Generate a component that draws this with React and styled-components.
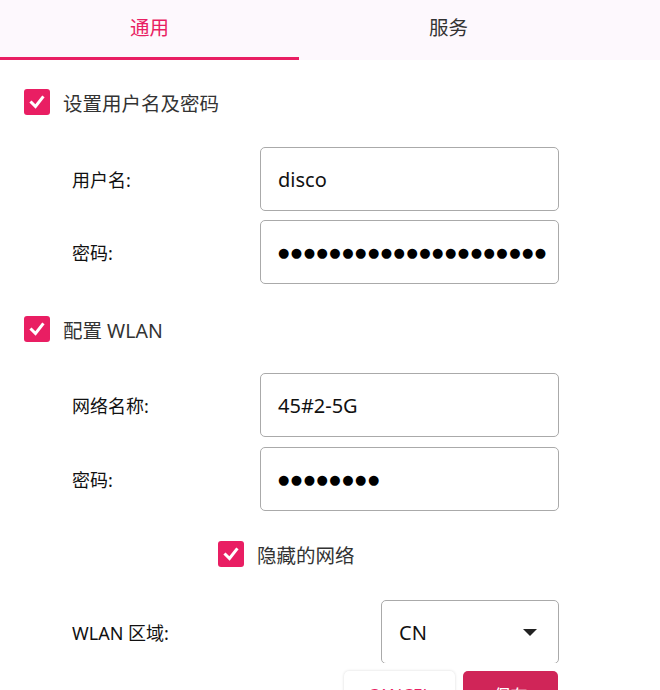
import React from "react";
import styled, { createGlobalStyle } from "styled-components";

const GlobalStyle = createGlobalStyle`
  html, body {
    margin: 0;
    padding: 0;
    background: #ffffff;
  }
  body {
    font-family: "Noto Sans", "Noto Sans CJK SC", sans-serif;
    color: #333;
  }
`;

const Page = styled.div`
  width: 660px;
  height: 690px;
  overflow: hidden;
  display: flex;
  flex-direction: column;
`;

const Scroll = styled.div`
  height: 663px;
  overflow: hidden;
  flex-shrink: 0;
`;

const TabBar = styled.div`
  display: flex;
  height: 60px;
  background: #fdf8fd;
`;

const Tab = styled.div`
  width: 299px;
  display: flex;
  align-items: center;
  justify-content: center;
  box-sizing: border-box;
  padding-bottom: 5px;
  font-size: 19.5px;
  font-family: "Noto Sans CJK SC", sans-serif;
  color: ${(p) => (p.$active ? "#e91e63" : "#333")};
  border-bottom: 3px solid ${(p) => (p.$active ? "#e91e63" : "transparent")};
`;

const Form = styled.div`
  padding: 0 0 0 24px;
  display: flex;
  flex-direction: column;
`;

const CheckRow = styled.label`
  display: flex;
  align-items: center;
  gap: 13px;
  height: 26px;
  margin-top: ${(p) => p.$top}px;
  margin-bottom: ${(p) => p.$bottom}px;
  margin-left: ${(p) => p.$indent || 0}px;
  font-size: 19.5px;
  font-family: "Noto Sans", "Noto Sans CJK SC", sans-serif;
  color: #333;
`;

const Box = styled.span`
  width: 26px;
  height: 26px;
  border-radius: 3px;
  background: #e91e63;
  display: inline-flex;
  align-items: center;
  justify-content: center;
  flex-shrink: 0;
`;

const Fields = styled.div`
  display: flex;
  flex-direction: column;
  gap: ${(p) => p.$gap}px;
`;

const FieldRow = styled.div`
  display: flex;
  align-items: center;
  padding-left: 48px;
`;

const Label = styled.div`
  width: ${(p) => p.$w || 188}px;
  font-size: 18px;
  color: #111;
`;

const Input = styled.div`
  width: 299px;
  height: 64px;
  box-sizing: border-box;
  border: 1.5px solid #aaa;
  border-radius: 5px;
  display: flex;
  align-items: center;
  padding-left: 17px;
  font-size: 20px;
  color: #111;
  overflow: hidden;
  white-space: nowrap;
`;

const Dots = styled.span`
  font-family: "DejaVu Sans", sans-serif;
  font-size: 13px;
  letter-spacing: 1.5px;
  color: #000;
`;

const Select = styled(Input)`
  width: 178px;
  justify-content: space-between;
  padding-right: 21px;
`;

const Caret = styled.span`
  width: 0;
  height: 0;
  border-left: 7px solid transparent;
  border-right: 7px solid transparent;
  border-top: 7px solid #222;
`;

const Footer = styled.div`
  display: flex;
  gap: 8px;
  padding-left: 344px;
  margin-top: 8px;
`;

const Button = styled.button`
  width: ${(p) => p.$w}px;
  height: 40px;
  border: none;
  border-radius: 5px;
  font-family: "Noto Sans", "Noto Sans CJK SC", sans-serif;
  font-size: 17px;
  padding-top: 8px;
  background: ${(p) => (p.$primary ? "#d02558" : "#fff")};
  color: ${(p) => (p.$primary ? "#fff" : "#e91e63")};
  box-shadow: ${(p) => (p.$primary ? "none" : "0 0 3px rgba(0,0,0,0.15)")};
`;

const Check = () => (
  <Box>
    <svg width="18" height="18" viewBox="0 0 18 18">
      <polyline points="3.5,9.5 7.5,13.5 14.5,4.5" fill="none" stroke="#fff" strokeWidth="3" strokeLinecap="square" />
    </svg>
  </Box>
);

export default function App() {
  return (
    <Page>
      <GlobalStyle />
      <Scroll>
        <TabBar>
          <Tab $active>通用</Tab>
          <Tab>服务</Tab>
        </TabBar>
        <Form>
          <CheckRow $top={29} $bottom={32}>
            <Check />
            设置用户名及密码
          </CheckRow>
          <Fields $gap={9}>
            <FieldRow>
              <Label>用户名:</Label>
              <Input>disco</Input>
            </FieldRow>
            <FieldRow>
              <Label>密码:</Label>
              <Input>
                <Dots>●●●●●●●●●●●●●●●●●●●●●</Dots>
              </Input>
            </FieldRow>
          </Fields>
          <CheckRow $top={32} $bottom={31}>
            <Check />
            配置 WLAN
          </CheckRow>
          <Fields $gap={10}>
            <FieldRow>
              <Label>网络名称:</Label>
              <Input>45#2-5G</Input>
            </FieldRow>
            <FieldRow>
              <Label>密码:</Label>
              <Input>
                <Dots>●●●●●●●●</Dots>
              </Input>
            </FieldRow>
          </Fields>
          <CheckRow $top={30} $bottom={33} $indent={194}>
            <Check />
            隐藏的网络
          </CheckRow>
          <FieldRow>
            <Label $w={309}>WLAN 区域:</Label>
            <Select>
              CN
              <Caret />
            </Select>
          </FieldRow>
        </Form>
      </Scroll>
      <Footer>
        <Button $w={111}>CANCEL</Button>
        <Button $w={95} $primary>保存</Button>
      </Footer>
    </Page>
  );
}
